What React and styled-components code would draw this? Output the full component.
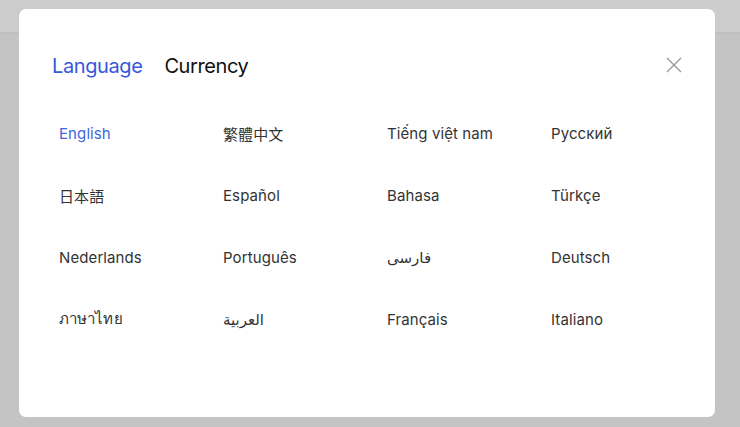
import React, { useState } from 'react';
import styled, { createGlobalStyle } from 'styled-components';

const GlobalStyle = createGlobalStyle`
    html, body {
        margin: 0;
        padding: 0;
        height: 100%;
    }
    body {
        background-color: #c4c4c4;
        font-family: Inter, "Noto Sans CJK SC", "DejaVu Sans", sans-serif;
        overflow: hidden;
    }
`;

const Page = styled.div`
    position: relative;
    height: 427px;
    background-color: #c4c4c4;
`;

const TopBar = styled.div`
    height: 32px;
    background-color: #cccccc;
    border-bottom: 2px solid #bfbfbf;
`;

const Modal = styled.div`
    position: absolute;
    top: 9px;
    left: 19px;
    width: 696px;
    height: 408px;
    background-color: #ffffff;
    border-radius: 7px;
    box-sizing: border-box;
    padding: 44px 33px 0 33px;
`;

const Header = styled.div`
    display: flex;
    align-items: center;
    justify-content: space-between;
    height: 26px;
`;

const Tabs = styled.div`
    display: flex;
    align-items: center;
    gap: 22px;
`;

const Tab = styled.button`
    border: none;
    background: none;
    padding: 0;
    font-family: inherit;
    font-size: 20px;
    line-height: 26px;
    letter-spacing: -0.4px;
    color: ${(p) => (p.$active ? '#3658db' : '#111111')};
    cursor: pointer;
`;

const CloseButton = styled.button`
    width: 16px;
    height: 16px;
    border: none;
    background: none;
    padding: 0;
    display: flex;
    cursor: pointer;
    margin-top: -2px;
`;

const Grid = styled.div`
    display: grid;
    grid-template-columns: repeat(4, 164px);
    grid-auto-rows: 62px;
    margin-top: 23px;
    padding-left: 7px;
`;

const Item = styled.div`
    display: flex;
    align-items: center;
    font-size: 15px;
    letter-spacing: 0.1px;
    color: ${(p) => (p.$active ? '#4066dd' : '#333333')};
    cursor: pointer;
`;

const languages = [
    'English', '繁體中文', 'Tiếng việt nam', 'Русский',
    '日本語', 'Español', 'Bahasa', 'Türkçe',
    'Nederlands', 'Português', 'فارسی', 'Deutsch',
    'ภาษาไทย', 'العربية', 'Français', 'Italiano',
];

const App = () => {
    const [tab, setTab] = useState('language');
    const [lang, setLang] = useState('English');

    return (
        <Page>
            <GlobalStyle />
            <TopBar />
            <Modal>
                <Header>
                    <Tabs>
                        <Tab $active={tab === 'language'} onClick={() => setTab('language')}>Language</Tab>
                        <Tab $active={tab === 'currency'} onClick={() => setTab('currency')}>Currency</Tab>
                    </Tabs>
                    <CloseButton aria-label="close">
                        <svg width="16" height="16" viewBox="0 0 16 16">
                            <path d="M1 1L15 15M15 1L1 15" stroke="#9a9a9a" strokeWidth="1.4" fill="none" />
                        </svg>
                    </CloseButton>
                </Header>
                <Grid>
                    {languages.map((name) => (
                        <Item key={name} $active={name === lang} onClick={() => setLang(name)}>
                            {name}
                        </Item>
                    ))}
                </Grid>
            </Modal>
        </Page>
    );
};

export default App;
